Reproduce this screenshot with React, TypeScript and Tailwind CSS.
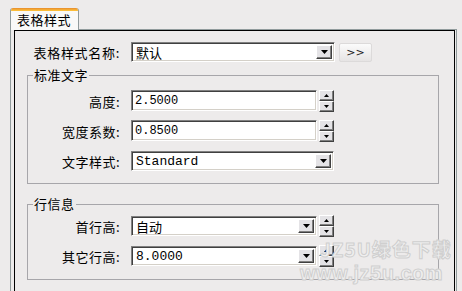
import React from "react";

const sunken =
  "border border-t-[#808080] border-l-[#808080] border-b-white border-r-white shadow-[inset_1px_1px_0_#404040,inset_-1px_-1px_0_#d4d0c8] bg-white";
const raised =
  "border border-t-white border-l-white border-b-[#404040] border-r-[#404040] shadow-[inset_-1px_-1px_0_#808080] bg-[#e4e3e6]";

function Arrow({ up = false, size = "small" }: { up?: boolean; size?: "small" | "big" }) {
  if (size === "big") {
    return (
      <svg width="7" height="4" viewBox="0 0 7 4">
        <path d="M0 0h7L3.5 4z" fill="#000" />
      </svg>
    );
  }
  return (
    <svg width="5" height="3" viewBox="0 0 5 3">
      <path d={up ? "M2.5 0L5 3H0z" : "M0 0h5L2.5 3z"} fill="#000" />
    </svg>
  );
}

function Spinner() {
  return (
    <div className="ml-[2px] flex w-[15px] flex-col">
      <div className={`flex h-[11px] items-center justify-center ${raised}`}>
        <Arrow up />
      </div>
      <div className={`flex h-[11px] items-center justify-center ${raised}`}>
        <Arrow />
      </div>
    </div>
  );
}

function Combo({ value, width, mono = false }: { value: string; width: string; mono?: boolean }) {
  return (
    <div className={`flex h-[20px] items-stretch p-[2px] ${width} ${sunken}`}>
      <div
        className={`flex-1 pl-[2px] text-[13px] leading-[16px] text-black ${
          mono ? "font-['Liberation_Mono',monospace] text-[12px]" : ""
        }`}
      >
        {value}
      </div>
      <div className={`flex w-[16px] items-center justify-center ${raised}`}>
        <Arrow size="big" />
      </div>
    </div>
  );
}

function NumberField({ value }: { value: string }) {
  return (
    <div className="flex items-start">
      <div
        className={`h-[21px] w-[186px] pl-[3px] pt-[2px] font-['Liberation_Mono',monospace] text-[12px] leading-[16px] text-black ${sunken}`}
      >
        {value}
      </div>
      <Spinner />
    </div>
  );
}

function Row({ label, children }: { label: string; children: React.ReactNode }) {
  return (
    <div className="flex h-[22px] items-center">
      <div className="w-[92px] text-right text-[13px] leading-none tracking-[0.5px] text-black">{label}</div>
      <div className="ml-[11px] flex items-center">{children}</div>
    </div>
  );
}

// etched group box drawn in flow: header line with caption, then the framed body
function Group({ title, className, bodyHeight, children }: { title: string; className: string; bodyHeight: string; children: React.ReactNode }) {
  const line = "border-[#a7a6aa]";
  return (
    <div className={`ml-[12px] w-[412px] ${className}`}>
      <div className="flex h-[14px]">
        <div className={`mt-[7px] w-[6px] border-l border-t ${line}`} />
        <div className="px-[1px] text-[13px] leading-[14px] tracking-[0.5px] text-black">{title}</div>
        <div className={`mt-[7px] flex-1 border-r border-t ${line}`} />
      </div>
      <div className={`border-x border-b ${line} ${bodyHeight}`}>{children}</div>
    </div>
  );
}

export default function App() {
  return (
    <div className="relative h-[291px] w-[462px] overflow-hidden bg-[#edebeb] font-['Noto_Sans_CJK_SC',sans-serif]">
      <div className="flex pl-[10px] pt-[8px]">
        <div className="relative z-10 -mb-px h-[22px] w-[69px] overflow-hidden rounded-t-[3px] border-x border-[#919b9c] bg-[#f9f9f8]">
          <div className="h-[3px] bg-gradient-to-b from-[#e68b2c] to-[#ffc73c]" />
          <div className="pl-[6px] pt-[1px] text-[13px] leading-[16px] tracking-[0.5px] text-black">表格样式</div>
        </div>
      </div>

      <div className="ml-[10px] h-[270px] w-[447px] border-x border-t border-[#919b9c]">
        <div className="ml-[3px] h-full w-[441px] border-x border-t border-black">
          <div className="mt-[11px] flex h-[20px] items-center">
            <div className="w-[105px] text-right text-[13px] leading-none tracking-[0.7px] text-black">表格样式名称:</div>
            <div className="ml-[11px]">
              <Combo value="默认" width="w-[204px]" />
            </div>
            <button className="ml-[4px] flex h-[19px] w-[33px] items-center justify-center rounded-[2px] border border-[#dcdada] bg-gradient-to-b from-[#fbfbfb] to-[#e6e4e4] font-['DejaVu_Sans',sans-serif] text-[11px] leading-none text-[#222]">
              &gt;&gt;
            </button>
          </div>

          <Group title="标准文字" className="mt-[6px]" bodyHeight="h-[102px]">
            <div className="flex flex-col gap-[8px] pt-[8px]">
              <Row label="高度:">
                <NumberField value="2.5000" />
              </Row>
              <Row label="宽度系数:">
                <NumberField value="0.8500" />
              </Row>
              <Row label="文字样式:">
                <Combo value="Standard" width="w-[203px]" mono />
              </Row>
            </div>
          </Group>

          <Group title="行信息" className="mt-[13px]" bodyHeight="h-[69px]">
            <div className="flex flex-col gap-[8px] pt-[4px]">
              <Row label="首行高:">
                <Combo value="自动" width="w-[186px]" />
                <Spinner />
              </Row>
              <Row label="其它行高:">
                <Combo value="8.0000" width="w-[186px]" mono />
                <Spinner />
              </Row>
            </div>
          </Group>
        </div>
      </div>

      <div className="pointer-events-none absolute left-[320px] top-[237px] text-[19px] font-bold leading-[24px] tracking-[1px] text-[#f0efef] [-webkit-text-stroke:1px_#cfcfcf]">
        JZ5U绿色下载
      </div>
      <div className="pointer-events-none absolute left-[300px] top-[262px] font-['Liberation_Sans',sans-serif] text-[20px] font-bold leading-[22px] tracking-[0.5px] text-[#f0efef] [-webkit-text-stroke:1px_#cfcfcf]">
        www.jz5u.com
      </div>
    </div>
  );
}
